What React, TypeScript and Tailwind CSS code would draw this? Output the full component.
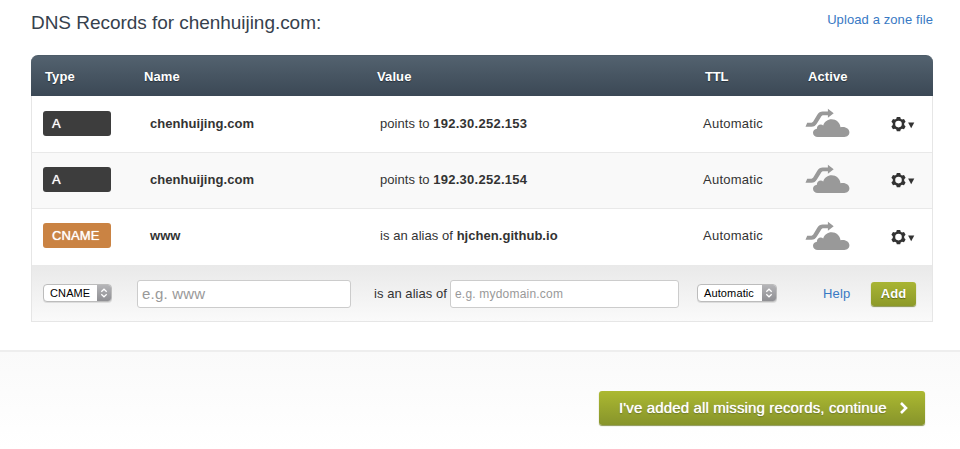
import React from "react";

type RecordRow = { type: "A" | "CNAME"; name: string; verb: string; value: string };

const records: RecordRow[] = [
  { type: "A", name: "chenhuijing.com", verb: "points to", value: "192.30.252.153" },
  { type: "A", name: "chenhuijing.com", verb: "points to", value: "192.30.252.154" },
  { type: "CNAME", name: "www", verb: "is an alias of", value: "hjchen.github.io" },
];

function CloudIcon() {
  return (
    <svg width="46" height="32" viewBox="0 0 46 32" fill="#999">
      <path d="M.5 18.8 2.2 14.8H5.6C7.1 14.8 7.8 14.1 8.7 12.7L12.3 6.7C13.7 4.4 15.3 3.4 17.8 3.4H22.9V.8L28.7 5.2 22.9 9.8V7.3H18.6C17.2 7.3 16.6 7.9 15.8 9.3L12.2 15.1C10.5 17.9 9 18.8 6.4 18.8Z" />
      <path d="M12.8 29C10 29 8 27.2 8 24.8 8 22.5 9.7 20.9 11.9 20.7 11.7 18.3 13.5 16.6 15.8 16.6 16.7 16.6 17.5 16.9 18.2 17.4 19.5 13.6 22.7 11.3 26.6 11.3 31.3 11.3 35 14.6 35.5 19.3 36.2 19 37 18.9 37.8 18.9 41.5 18.9 44.4 21.2 44.4 24.3 44.4 27 42.3 29 39.4 29Z" />
    </svg>
  );
}

function GearIcon() {
  return (
    <svg width="26" height="16" viewBox="0 0 26 16" fill="#333">
      <path
        fillRule="evenodd"
        d="M5.8.9H9.2L9.7 2.7 11 3.4 13 2.9 14.6 5.8 13.2 7.3V8.9L14.6 10.4 13 13.2 11 12.8 9.7 13.5 9.2 15.3H5.8L5.3 13.5 4 12.8 2 13.2.4 10.4 1.8 8.9V7.3L.4 5.8 2 2.9 4 3.4 5.3 2.7ZM7.5 4.8A3.3 3.3 0 1 0 7.5 11.4 3.3 3.3 0 0 0 7.5 4.8Z"
      />
      <path d="M17.1 6.4H23.3L20.2 12.2Z" />
    </svg>
  );
}

function Select({ label, className }: { label: string; className: string }) {
  return (
    <button
      className={`mb-[2px] flex h-[18px] items-stretch overflow-hidden rounded-[4px] border border-[#bcbcbc] bg-white text-[11px] tracking-[0.12px] text-black shadow-[0_1px_0_#ddd] ${className}`}
    >
      <span className="flex-1 pl-[6px] text-left leading-[17px] whitespace-nowrap">{label}</span>
      <span className="flex w-[14px] items-center justify-center bg-linear-to-b from-[#b5b5b8] to-[#8f8f93]">
        <svg width="8" height="10" viewBox="0 0 8 10" fill="none" stroke="white" strokeWidth="1.2">
          <path d="M1.3 3.8 4 1.2 6.7 3.8M1.3 6.2 4 8.8 6.7 6.2" />
        </svg>
      </span>
    </button>
  );
}

export default function App() {
  return (
    <div className="h-[449px] w-[960px] overflow-hidden bg-white font-['Liberation_Sans',Arial,sans-serif] text-[13px] text-[#333]">
      <div className="flex h-[350px] flex-col pr-[27px] pl-[31px]">
        <div className="flex h-[55px] shrink-0 justify-between">
          <h1 className="pt-[10px] text-[19px] leading-[26px] tracking-[-0.04px] text-[#36414d]">
            DNS Records for chenhuijing.com:
          </h1>
          <a className="pt-[11px] leading-[18px] tracking-[0.1px] text-[#3879c4]">Upload a zone file</a>
        </div>

        <div className="flex h-[41px] shrink-0 items-center rounded-t-[7px] border-t border-[#4d5c68] bg-linear-to-b from-[#53626f] to-[#3b4855] pt-[2px] pl-[14px] font-bold tracking-[0.1px] text-white [text-shadow:0_1px_1px_#26313b]">
          <span className="w-[99px]">Type</span>
          <span className="w-[233px]">Name</span>
          <span className="w-[328px]">Value</span>
          <span className="w-[103px] tracking-[-0.2px]">TTL</span>
          <span>Active</span>
        </div>

        <div className="border-x border-b border-[#e6e6e6]">
          {records.map((r, i) => (
            <div
              key={i}
              className={`flex items-center pl-[11px] ${i === 1 ? "bg-[#f9f9f9]" : "bg-white"} ${i === 2 ? "h-[56px]" : "h-[56.5px] border-b border-[#e9e9e9]"}`}
            >
              <div className={`flex items-center ${i === 2 ? "mb-[3px]" : "mb-[1px]"}`}>
                <span
                  className={`flex h-[25px] w-[68px] items-center rounded-[3px] pl-[9px] text-[13px] tracking-[0.1px] text-white [text-shadow:0_0_1px_white] ${r.type === "A" ? "bg-[#3d3d3d]" : "bg-[#ca8343]"}`}
                >
                  {r.type}
                </span>
                <span className="ml-[39px] w-[230px] font-bold tracking-[0.05px]">{r.name}</span>
                <span className="w-[323px] tracking-[0.05px]">
                  {r.verb} <b className={r.type === "A" ? "tracking-[0.26px]" : "tracking-[0.04px]"}>{r.value}</b>
                </span>
                <span className="w-[102px] tracking-[0.25px]">Automatic</span>
              </div>
              <CloudIcon />
              <span className="ml-[40px]">
                <GearIcon />
              </span>
            </div>
          ))}
          <div className="flex h-[56px] items-center bg-linear-to-b from-[#e9e9e9] to-[#fafafa] pt-[1px] pl-[11px]">
            <Select label="CNAME" className="w-[69px]" />
            <input
              placeholder="e.g. www"
              className="ml-[25px] h-[28px] w-[214px] rounded-[3px] border border-[#ccc] bg-white pl-1 text-[15px] tracking-[0.2px] placeholder:text-[#999]"
            />
            <span className="ml-[23px] w-[76px] tracking-[0.05px] whitespace-nowrap">is an alias of</span>
            <input
              placeholder="e.g. mydomain.com"
              className="h-[28px] w-[229px] rounded-[3px] border border-[#ccc] bg-white pl-1 text-[12px] tracking-[0.2px] placeholder:text-[#999]"
            />
            <Select label="Automatic" className="ml-[18px] w-[80px]" />
            <a className="ml-[46px] w-[48px] pt-[1px] tracking-[0.2px] text-[#3879c4]">Help</a>
            <button className="h-[24px] w-[45px] rounded-[3px] bg-linear-to-b from-[#a9b534] to-[#8d9a29] font-bold text-white shadow-[0_1px_1px_#8b9552] [text-shadow:0_1px_1px_#5d6818]">
              Add
            </button>
          </div>
        </div>
      </div>

      <div className="flex h-[99px] items-start justify-end border-t-2 border-[#eee] bg-linear-to-b from-[#fafafa] to-white pt-[39px] pr-[35px]">
        <button className="flex h-[34px] w-[326px] items-center rounded-[3px] bg-linear-to-b from-[#acb931] to-[#87942b] pl-[20px] text-[15px] tracking-[0.14px] whitespace-nowrap text-white shadow-[0_1px_1px_#8b9552] [text-shadow:0_0_1px_white,0_1px_1px_#5d6818]">
          I've added all missing records, continue
          <svg className="ml-[12px]" width="10" height="14" viewBox="0 0 10 14" fill="none" stroke="white" strokeWidth="2.6">
            <path d="M2 2 7 7 2 12" />
          </svg>
        </button>
      </div>
    </div>
  );
}
